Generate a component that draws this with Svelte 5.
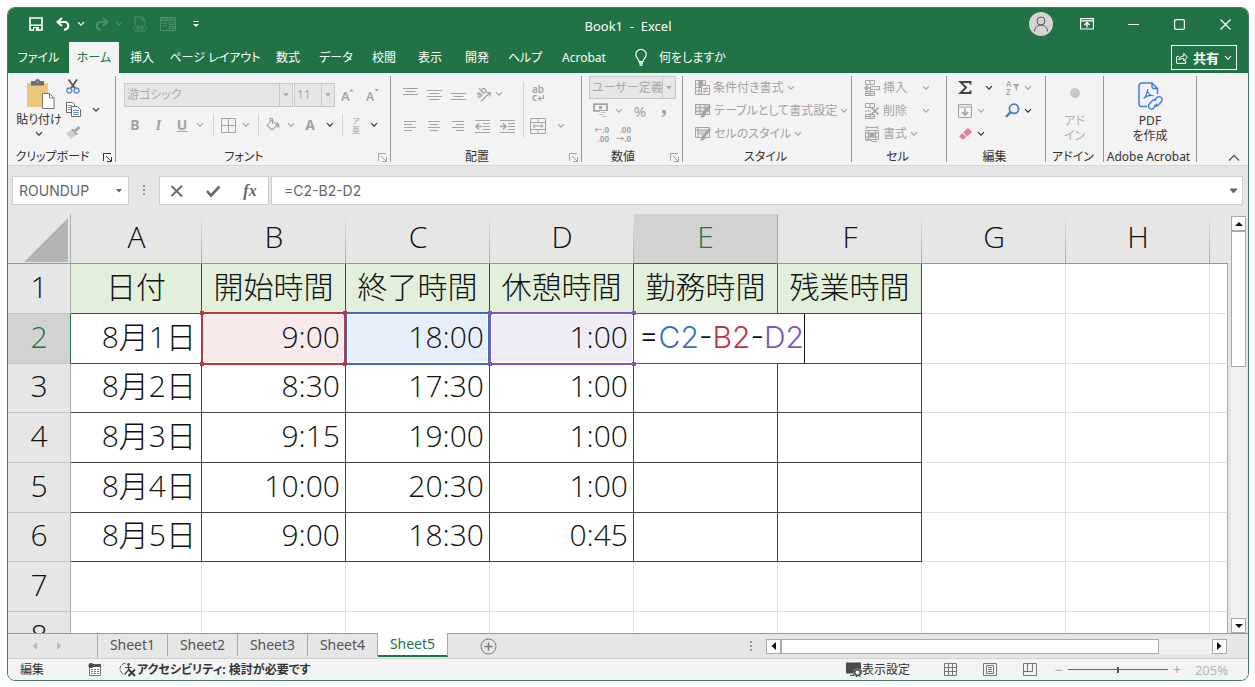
<script>
  const chev = '<path d="M1 1.2 4 4.2 7 1.2" fill="none" stroke="currentColor" stroke-width="1.2"/>';

  const icons = {
    chevron: [8, 6, chev],
    save: [14, 14, '<path d="M1 1h12v12H1z" fill="none" stroke="currentColor" stroke-width="1.6"/><path d="M1 8.2h12" stroke="currentColor" stroke-width="1.4"/><path d="M4 10h6v4H4z" fill="currentColor"/><path d="M5.2 11h1.6v3H5.2z" fill="#217346"/>'],
    undo: [15, 14, '<path d="M6 1 1.6 5 6 9M2 5h7.5a4 4 0 0 1 0 7.6H8" fill="none" stroke="currentColor" stroke-width="2.1"/>'],
    redo: [15, 14, '<path d="M9 1 13.4 5 9 9M13 5H5.500a4 4 0 0 0 0 7.600H7" fill="none" stroke="currentColor" stroke-width="2.1"/>'],
    docTool: [14, 16, '<path d="M2 10V1h7l3 3v6M9 1v3h3M2 13v2h10v-2" fill="none" stroke="currentColor"/><path d="M0 11.500h2M12 11.500h2M4 10h2v3H4zM8 10h2v3H8z" fill="none" stroke="currentColor"/>'],
    formTool: [16, 14, '<path d="M.5.5h15v13H.5zM.5 3.500h15M.5 2h15M2 6h5M2 9h5M9 5.500h5v2H9zM9 9.500h5v2H9z" fill="none" stroke="currentColor"/>'],
    customize: [8, 8, '<path d="M1.500 1.500h5" stroke="currentColor"/><path d="M1 4h6L4 7z" fill="currentColor"/>'],
    user: [24, 24, '<circle cx="12" cy="12" r="12" fill="#d4d4d4"/><circle cx="12" cy="9" r="4" fill="none" stroke="#555"/><path d="M5.500 19.500c0-8.500 13-8.500 13 0" fill="none" stroke="#555"/>'],
    ribbonMode: [14, 12, '<path d="M.6.6h12.800v10.400H.6zM.6 2.800h12.800" fill="none" stroke="currentColor" stroke-width="1.200"/><path d="M7 9.500V5M4.500 7 7 4.500 9.500 7" fill="none" stroke="currentColor" stroke-width="1.300"/>'],
    minimize: [11, 11, '<path d="M0 5.500h11" stroke="currentColor" stroke-width="1.200"/>'],
    maximize: [11, 11, '<rect x=".6" y=".6" width="9.800" height="9.800" rx="1.500" fill="none" stroke="currentColor" stroke-width="1.200"/>'],
    close: [11, 11, '<path d="m.5.5 10 10M10.500.5l-10 10" stroke="currentColor" stroke-width="1.200"/>'],
    share: [12, 12, '<path d="M3 4.500H.6v6.900h9V8.500M2.800 8c.3-3 2.500-4 5-4V1.300l3.500 4L7.800 9V6.500c-2 0-3.800.2-5 1.500z" fill="none" stroke="currentColor"/>'],
    bulb: [12, 17, '<path d="M4 12.500c0-2.500-3.200-3.300-3.200-7a5.200 5.200 0 0 1 10.400 0c0 3.700-3.200 4.500-3.200 7z" fill="none" stroke="currentColor" stroke-width="1.200"/><path d="M4 14h4M4.500 16h3" stroke="currentColor" stroke-width="1.300"/>'],
    paste: [28, 30, '<path d="M0 4h21v24H0z" fill="#ecc67a"/><path d="M4 2h4a2.600 2.600 0 0 1 5 0h4v4.500H4z" fill="#6c6c6c"/><path d="M10.500 2.500v.8" stroke="#fff" stroke-width="1.500"/><path d="M15.500 14.500h7l4.500 4.500v10.500H15.500z" fill="#fff" stroke="#777"/><path d="M22.500 14.500V19H27" fill="none" stroke="#777"/>'],
    cut: [14, 15, '<path d="M2.500.5 9.500 10M11 .5 4.500 10" stroke="#555" stroke-width="1.800"/><circle cx="3.300" cy="11.500" r="2.500" fill="none" stroke="#5a8ac6" stroke-width="1.300"/><circle cx="10.500" cy="11.500" r="2.500" fill="none" stroke="#5a8ac6" stroke-width="1.300"/>'],
    copy: [15, 16, '<path d="M.5.5h6l2 2v8h-8z" fill="#fff" stroke="#666"/><path d="M2 3.500h4M2 5.500h4M2 7.500h4" stroke="#6d94c4"/><path d="M5.500 4.500h6l3 3v7h-9z" fill="#fff" stroke="#666"/><path d="M7 8.500h6M7 10.500h6M7 12.500h6" stroke="#6d94c4"/>'],
    brush: [15, 13, '<path d="M0 7l5-3 4.500 5L5 13z" fill="#cfcfcf"/><path d="m5 3.500 2-1 5 5.500-1.800 1.500z" fill="#a9a9a9"/><path d="m9 5 4.500-4" stroke="#a9a9a9" stroke-width="2.800"/>'],
    launcher: [9, 9, '<path d="M.5 8V.5H8M3 3l5 5M8.500 4v4.500H4" fill="none" stroke="currentColor"/>'],
    grow: [14, 14, '<text x="0" y="13" font-size="13" font-weight="600" fill="currentColor">A</text><path d="M8.500 3.500 10.500 1l2 2.500z" fill="currentColor"/>'],
    shrink: [14, 14, '<text x="0" y="13" font-size="12" font-weight="600" fill="currentColor">A</text><path d="M8.500 1 10.500 3.500l2-2.500z" fill="currentColor"/>'],
    borders: [15, 15, '<path d="M.5.5h14v14H.5zM7.500.5v14M.5 7.500h14" fill="none" stroke="currentColor"/>'],
    fill: [14, 14, '<path d="M1 7.500 6 2l5 5.500-5 4.500zM4 5V.5h2.500V6" fill="none" stroke="currentColor" stroke-width="1.100"/><path d="M10.500 5c1.500.5 2 2 2 4.500" fill="none" stroke="currentColor" stroke-width="2"/>'],
    top: [15, 13, '<path d="M0 .5h15M2.500 3.500h10M0 6.500h15" stroke="currentColor"/>'],
    middle: [15, 13, '<path d="M0 2.500h15M2.500 5.500h10M0 8.500h15M2.500 11.500h10" stroke="currentColor"/>'],
    bottom: [15, 13, '<path d="M0 5.500h15M2.500 8.500h10M0 11.500h15" stroke="currentColor"/>'],
    left: [12, 10, '<path d="M0 .5h12M0 3.500h8M0 6.500h12M0 9.500h8" stroke="currentColor"/>'],
    center: [12, 10, '<path d="M0 .5h12M2 3.500h8M0 6.500h12M2 9.500h8" stroke="currentColor"/>'],
    right: [12, 10, '<path d="M0 .5h12M4 3.500h8M0 6.500h12M4 9.500h8" stroke="currentColor"/>'],
    orient: [16, 15, '<text x="0" y="0" font-size="10" font-weight="600" fill="currentColor" transform="translate(4 12) rotate(-45)">ab</text><path d="M6 14.500 14.500 6M11 5.500h4v4" fill="none" stroke="currentColor" stroke-width="1.200"/>'],
    outdent: [15, 13, '<path d="M0 .5h15M8 3.500h7M8 6.500h7M8 9.500h7M0 12.500h15" stroke="currentColor"/><path d="M7 6.500H1M4 3.500l-3 3 3 3" fill="none" stroke="currentColor" stroke-width="1.600"/>'],
    indent: [15, 13, '<path d="M0 .5h15M8 3.500h7M8 6.500h7M8 9.500h7M0 12.500h15" stroke="currentColor"/><path d="M0 6.500h6M3 3.500l3 3-3 3" fill="none" stroke="currentColor" stroke-width="1.600"/>'],
    merge: [16, 16, '<path d="M.5.5h15v15H.5zM.5 4.500h15M.5 11.500h15M8 .5v4M8 11.500v4M3 8h10M5 6 3 8l2 2M11 6l2 2-2 2" fill="none" stroke="currentColor"/>'],
    wrap: [14, 16, '<text x="1" y="7" font-size="10" font-weight="600" fill="currentColor">ab</text><text x="1" y="15" font-size="10" font-weight="600" fill="currentColor">c</text><path d="M12.500 9v3.500H7.500M9.500 10.500l-2 2 2 2" fill="none" stroke="currentColor" stroke-width="1.100"/>'],
    currency: [16, 15, '<path d="M1 1.200h13v6.600H1z" fill="none" stroke="currentColor" stroke-width="1.800"/><circle cx="7.500" cy="4.500" r="1.800" fill="currentColor"/><path d="M7 8h8v7H7z" fill="#f3f3f3"/><path d="M8 9.500h5M6 11.500h5M9 13.500h5M10 7.500h5" stroke="currentColor" opacity=".6"/>'],
    condFormat: [15, 15, '<path d="M.5.5h10v14H.5zM.5 4h10M.5 7.500h10M.5 11h10M4 .5v14" fill="none" stroke="currentColor"/><path d="M4 1h4v6H4z" fill="currentColor"/><path d="M6.500 5.500h8v9h-8zM8 8.500h5M8 11.500h5M12 7l-3 6" fill="#f3f3f3" stroke="currentColor"/>'],
    tableFormat: [16, 15, '<path d="M.5 1.500h14v10H.5zM.5 4.800h14M.5 8.200h14M5 1.500v10M10 1.500v10" fill="#e4e4e4" stroke="currentColor"/><path d="M15 3 9 10" stroke="currentColor" stroke-width="2.800"/><path d="M5 14.500c3 .5 6-1 5.500-4.500L8 8.800C6 10 7 13 5 14.500z" fill="currentColor"/>'],
    cellStyle: [16, 15, '<path d="M.5 1.500h14v10H.5z" fill="none" stroke="currentColor"/><path d="M3 4h9v5H3z" fill="#d4d0d4"/><path d="M.5 4h14M3 1.500v10" stroke="currentColor"/><path d="M15 3 9 10" stroke="currentColor" stroke-width="2.800"/><path d="M5 14.500c3 .5 6-1 5.500-4.500L8 8.800C6 10 7 13 5 14.500z" fill="currentColor"/>'],
    insertCell: [16, 16, '<path d="M1.500.5h9v4h-9zM6 .5v4M1.500 11.500h9v4h-9zM1.500 13.500h9M6 10v5.500M6.500 6.500h9v3h-9z" fill="none" stroke="currentColor"/><path d="M6 8H1M3.500 5.500 1 8l2.500 2.500" fill="none" stroke="currentColor" stroke-width="1.500"/>'],
    deleteCell: [16, 16, '<path d="M1.500.5h9v4h-9zM6 .5v4M1.500 11.500h9v4h-9zM1.500 13.500h9M6 10v5.500M1 8h6" fill="none" stroke="currentColor"/><path d="m7.500 4.500 7 7M14.500 4.500l-7 7" stroke="currentColor" stroke-width="1.700"/>'],
    formatCell: [16, 16, '<path d="M2.500 1.500h11M2.500 0v3M13.500 0v3M1.500 4.500h13v9h-13zM1.500 7h13M1.500 11h13M4.500 4.500v9M11.500 4.500v9M2 14.500l5-.5 1 1.500h5" fill="none" stroke="currentColor"/><path d="M5.500 7h5v4h-5z" fill="currentColor"/>'],
    sum: [13, 13, '<path d="M11.500 3.500V1H1.500L7 6.500 1.500 12h10V9.500" fill="none" stroke="#444" stroke-width="1.900"/>'],
    fillDown: [14, 14, '<path d="M.5.5h13v13H.5zM.5 3h13" fill="none" stroke="currentColor"/><path d="M7 4.500V11M4 8l3 3 3-3" fill="none" stroke="currentColor" stroke-width="1.700"/>'],
    eraser: [13, 12, '<path d="M4.200 4.500 9 0l4 4-5 4.500z" fill="#e5808f"/><path d="M3.500 5.200 0 8.300l3.700 3.500 3.600-2.700z" fill="#e5808f"/>'],
    sort: [14, 14, '<text x="0" y="6" font-size="8" font-weight="600" fill="currentColor">A</text><text x="0" y="14" font-size="8" font-weight="600" fill="currentColor">Z</text><path d="M7 3h6.500L11 6.300V9.500L9.500 8.500V6.300z" fill="currentColor"/>'],
    find: [15, 15, '<circle cx="9" cy="5.800" r="4.600" fill="none" stroke="#4a7ebb" stroke-width="1.700"/><path d="M5.600 9.200 1 13.800" stroke="#4a7ebb" stroke-width="2.400"/>'],
    dot: [10, 10, '<circle cx="5" cy="5" r="5" fill="#c6c6c6"/>'],
    pdf: [25, 29, '<g fill="none" stroke="#3f7bea" stroke-width="1.500"><path d="M9 24.500H3.500a2.500 2.500 0 0 1-2.500-2.500V3.500A2.500 2.500 0 0 1 3.500 1H14l5.500 5.500V12M14 1v3.500a2 2 0 0 0 2 2h3.500"/><path d="M5.500 16.500c2-1 4.500-6.500 4-9.500M9.500 8c0 3 3 6 6 5.500M6 16c2-2 6-3 9.500-2.500" stroke-width="1.200"/><path d="m16 18.500 3-3a3 3 0 0 1 4.300 4.200l-3 3.200a3 3 0 0 1-4 .2M19 22l-3.200 4a3 3 0 0 1-4.500-4l3-3.200a3 3 0 0 1 3.800-.4" stroke-width="1.400"/></g>'],
    collapse: [12, 8, '<path d="m1 6.500 5-5 5 5" fill="none" stroke="#555" stroke-width="1.300"/>'],
    cancel: [14, 12, '<path d="m1.500 1 10.500 10.500M12 .8 1.500 11" stroke="#6a6a6a" stroke-width="1.900"/>'],
    enter: [15, 12, '<path d="m1 6 4 4.500L13.500 1.500" fill="none" stroke="#6a6a6a" stroke-width="2.600"/>'],
    navLeft: [5, 8, '<path d="M5 0v8L.5 4z" fill="currentColor"/>'],
    navRight: [5, 8, '<path d="M0 0v8l4.500-4z" fill="currentColor"/>'],
    caretDown: [8, 4, '<path d="M0 0h8L4 4z" fill="currentColor"/>'],
    caretUp: [8, 4, '<path d="M0 4h8L4 0z" fill="currentColor"/>'],
    comboArrow: [6, 4, '<path d="M0 0h6L3 3.500z" fill="currentColor"/>'],
    expand: [9, 6, '<path d="M1 1h7L4.500 5z" fill="#666" stroke="#666"/>'],
    addSheet: [17, 17, '<circle cx="8.500" cy="8.500" r="7.500" fill="none" stroke="#777"/><path d="M8.500 4.500v8M4.500 8.500h8" stroke="#777" stroke-width="1.400"/>'],
    macro: [14, 13, '<path d="M1.500 2.500h11v10h-11z" fill="#fff" stroke="#777"/><path d="M5 1h8v3H5z" fill="#555"/><circle cx="3" cy="2.500" r="2.500" fill="#444"/><path d="M3 6.500h8M3 8.500h8M3 10.500h8" stroke="#777" stroke-dasharray="2 1"/>'],
    access: [16, 15, '<path d="M5.500 1.300a5.500 5.500 0 0 0 0 11" fill="none" stroke="#555" stroke-dasharray="4 1"/><path d="M5 5.500h7M8.500 2.500V8l-3.500 4" fill="none" stroke="#444" stroke-width="1.200"/><circle cx="8.500" cy="2.200" r="1.300" fill="#444"/><path d="m8.500 7.500 6.500 6.500M15 7.500 8.500 14" stroke="#333" stroke-width="1.800"/>'],
    display: [16, 15, '<path d="M0 .5h15v11H0z" fill="#4a4a4a"/><path d="M4 13.500h4" stroke="#4a4a4a"/><circle cx="11.500" cy="10.500" r="4" fill="#f3f3f3"/><circle cx="11.500" cy="10.500" r="2.800" fill="none" stroke="#4a4a4a" stroke-width="1.500"/><circle cx="11.500" cy="10.500" r="4.200" fill="none" stroke="#4a4a4a" stroke-width="1.200" stroke-dasharray="1.700 1.600"/>'],
    viewNormal: [13, 13, '<path d="M.5.5h12v12H.5zM4.500.5v12M8.500.5v12M.5 4.500h12M.5 8.500h12" fill="none" stroke="#777"/>'],
    viewPage: [14, 13, '<path d="M.5.5h13v12H.5zM3.500 2.500h7v8h-7zM5 4.500h4M5 6.500h4M5 8.500h4" fill="none" stroke="#777"/>'],
    viewBreak: [14, 13, '<path d="M.5.5h13v12H.5zM.5 8.500h9M4.500.5v8M9.500.5v8" fill="none" stroke="#777"/>'],
  };

  const menu = ['ファイル', 'ホーム', '挿入', 'ページ レイアウト', '数式', 'データ', '校閲', '表示', '開発', 'ヘルプ', 'Acrobat'];
  const cols = ['A', 'B', 'C', 'D', 'E', 'F', 'G', 'H', ''];
  const rows = [
    ['日付', '開始時間', '終了時間', '休憩時間', '勤務時間', '残業時間'],
    ['8月1日', '9:00', '18:00', '1:00', '=C2-B2-D2', ''],
    ['8月2日', '8:30', '17:30', '1:00', '', ''],
    ['8月3日', '9:15', '19:00', '1:00', '', ''],
    ['8月4日', '10:00', '20:30', '1:00', '', ''],
    ['8月5日', '9:00', '18:30', '0:45', '', ''],
    [],
    [],
  ];
  const formula = [
    ['=', ''],
    ['C2', 'blue'],
    ['-', ''],
    ['B2', 'red'],
    ['-', ''],
    ['D2', 'purple'],
  ];
  const refs = { 1: 'red', 2: 'blue', 3: 'purple' };
  const sheets = ['Sheet1', 'Sheet2', 'Sheet3', 'Sheet4', 'Sheet5'];

  let activeMenu = $state('ホーム');
  let activeSheet = $state('Sheet5');
  let zoom = $state(50);
</script>

{#snippet icon(name)}
  {@const [w, h, body] = icons[name]}
  <svg width={w} height={h} viewBox="0 0 {w} {h}" aria-hidden="true">{@html body}</svg>
{/snippet}

{#snippet tool(name, label, cls = '')}
  <button class="tool {cls}" aria-label={label}>{@render icon(name)}</button>
{/snippet}

{#snippet wide(name, label, cls = '')}
  <button class="wide {cls}">{@render icon(name)}<span>{label}</span>{@render icon('chevron')}</button>
{/snippet}

{#snippet groupLabel(label, launcher = '')}
  <div class="group-label">
    <span>{label}</span>
    {#if launcher}<button class="tool launcher {launcher}" aria-label="{label}の設定">{@render icon('launcher')}</button>{/if}
  </div>
{/snippet}

<div class="desktop">
  <div class="window">
    <header class="titlebar">
      <div class="quick">
        {@render tool('save', '上書き保存')}
        {@render tool('undo', '元に戻す')}
        {@render tool('chevron', '元に戻す履歴')}
        {@render tool('redo', 'やり直し', 'faded')}
        {@render tool('chevron', 'やり直し履歴', 'faded')}
        {@render tool('docTool', '文書', 'faded')}
        {@render tool('formTool', 'フォーム', 'faded')}
        {@render tool('customize', 'クイック アクセスのカスタマイズ')}
      </div>
      <div class="title">Book1&nbsp; -&nbsp; Excel</div>
      <div class="controls">
        {@render tool('user', 'アカウント')}
        {@render tool('ribbonMode', 'リボンの表示オプション')}
        {@render tool('minimize', '最小化')}
        {@render tool('maximize', '最大化')}
        {@render tool('close', '閉じる')}
      </div>
    </header>

    <nav class="menubar">
      <div class="menu">
        {#each menu as item}
          <button class:active={item === activeMenu} onclick={() => (activeMenu = item)}>{item}</button>
        {/each}
      </div>
      <button class="tell">{@render icon('bulb')}<span>何をしますか</span></button>
      <button class="share">{@render icon('share')}<span>共有</span>{@render icon('chevron')}</button>
    </nav>

    <section class="ribbon">
      <div class="group">
        <div class="clipboard">
          <button class="big paste">{@render icon('paste')}<span>貼り付け</span>{@render icon('chevron')}</button>
          <div class="stack">
            {@render tool('cut', '切り取り')}
            {@render tool('copy', 'コピー')}
            {@render tool('brush', '書式のコピー')}
          </div>
          {@render tool('chevron', 'コピーのオプション', 'dark')}
        </div>
        {@render groupLabel('クリップボード', 'dark')}
      </div>

      <div class="group">
        <div class="font">
          <div class="font-pick">
            <label class="combo family"><select aria-label="フォント" disabled><option>游ゴシック</option></select><i>{@render icon('comboArrow')}</i></label>
            <label class="combo size"><select aria-label="フォント サイズ" disabled><option>11</option></select><i>{@render icon('comboArrow')}</i></label>
            {@render tool('grow', 'フォント サイズの拡大')}
            {@render tool('shrink', 'フォント サイズの縮小')}
          </div>
          <div class="font-tools">
            <button class="tool glyph"><b>B</b></button>
            <button class="tool glyph serif"><i>I</i></button>
            <button class="tool glyph"><u>U</u></button>
            {@render tool('chevron', '下線の種類')}
            <span class="rule"></span>
            {@render tool('borders', '罫線')}
            {@render tool('chevron', '罫線の種類')}
            <span class="rule"></span>
            {@render tool('fill', '塗りつぶしの色')}
            {@render tool('chevron', '塗りつぶしの一覧')}
            <button class="tool glyph"><b>A</b></button>
            {@render tool('chevron', '文字色の一覧', 'dark')}
            <span class="rule"></span>
            <button class="tool ruby" aria-label="ふりがな"><span>ア</span><span>亜</span></button>
            {@render tool('chevron', 'ふりがなの設定', 'dark')}
          </div>
        </div>
        {@render groupLabel('フォント', 'pale')}
      </div>

      <div class="group">
        <div class="align">
          {@render tool('top', '上揃え')}
          {@render tool('middle', '上下中央揃え')}
          {@render tool('bottom', '下揃え')}
          {@render tool('orient', '方向')}
          {@render tool('chevron', '方向の一覧', 'start')}
          <span class="rule tall"></span>
          {@render tool('wrap', '折り返して全体を表示する')}
          <span></span>
          {@render tool('left', '左揃え')}
          {@render tool('center', '中央揃え')}
          {@render tool('right', '右揃え')}
          {@render tool('outdent', 'インデントを減らす')}
          {@render tool('indent', 'インデントを増やす')}
          {@render tool('merge', 'セルを結合して中央揃え')}
          {@render tool('chevron', '結合の一覧')}
        </div>
        {@render groupLabel('配置', 'pale')}
      </div>

      <div class="group">
        <div class="number">
          <label class="combo format"><select aria-label="数値の書式" disabled><option>ユーザー定義</option></select><i>{@render icon('comboArrow')}</i></label>
          {@render tool('currency', '通貨表示形式')}
          {@render tool('chevron', '通貨の一覧')}
          <button class="tool percent">%</button>
          <button class="tool comma">,</button>
          <button class="tool decimals" aria-label="小数点以下の表示桁数を増やす"><span>←.0</span><span>.00</span></button>
          <button class="tool decimals" aria-label="小数点以下の表示桁数を減らす"><span>.00</span><span>→.0</span></button>
        </div>
        {@render groupLabel('数値', 'pale')}
      </div>

      <div class="group">
        <div class="list">
          {@render wide('condFormat', '条件付き書式')}
          {@render wide('tableFormat', 'テーブルとして書式設定')}
          {@render wide('cellStyle', 'セルのスタイル')}
        </div>
        {@render groupLabel('スタイル')}
      </div>

      <div class="group">
        <div class="list">
          {@render wide('insertCell', '挿入', 'spread')}
          {@render wide('deleteCell', '削除', 'spread')}
          {@render wide('formatCell', '書式')}
        </div>
        {@render groupLabel('セル')}
      </div>

      <div class="group">
        <div class="edit">
          {@render tool('sum', 'オート SUM')}
          {@render tool('chevron', '集計の一覧', 'dark apart')}
          {@render tool('sort', '並べ替えとフィルター', 'end')}
          {@render tool('chevron', '並べ替えの一覧')}
          {@render tool('fillDown', 'フィル')}
          {@render tool('chevron', 'フィルの一覧')}
          {@render tool('find', '検索と選択', 'end')}
          {@render tool('chevron', '検索の一覧', 'dark')}
          {@render tool('eraser', 'クリア')}
          {@render tool('chevron', 'クリアの一覧', 'dark')}
        </div>
        {@render groupLabel('編集')}
      </div>

      <div class="group">
        <button class="big addin" disabled>{@render icon('dot')}<span>アド<br />イン</span></button>
        {@render groupLabel('アドイン')}
      </div>

      <div class="group">
        <button class="big pdf">{@render icon('pdf')}<span>PDF<br />を作成</span></button>
        {@render groupLabel('Adobe Acrobat')}
      </div>

      <div class="tail">{@render tool('collapse', 'リボンを折りたたむ')}</div>
    </section>

    <section class="formula-bar">
      <div class="name-box">
        <input aria-label="名前ボックス" value="ROUNDUP" />
        {@render tool('comboArrow', '名前の一覧')}
      </div>
      <span class="dots"></span>
      <div class="entry">
        {@render tool('cancel', 'キャンセル')}
        {@render tool('enter', '入力')}
        <button class="tool fx">fx</button>
      </div>
      <div class="formula">
        <input aria-label="数式バー" value="=C2-B2-D2" />
        {@render tool('expand', '数式バーの展開')}
      </div>
    </section>

    <main class="workspace">
      <div class="grid">
        <table>
          <colgroup>
            <col class="c-head" />
            <col class="c-first" />
            {#each cols.slice(1, 8) as _}<col class="c-data" />{/each}
            <col />
          </colgroup>
          <thead>
            <tr>
              <th class="corner" aria-label="すべて選択">
                <svg width="44" height="44" viewBox="0 0 44 44"><path d="M44 0v44H0z" fill="#b4b4b4" /></svg>
              </th>
              {#each cols as col}
                <th scope="col" class:current={col === 'E'}>{col}</th>
              {/each}
            </tr>
          </thead>
          <tbody>
            {#each rows as row, r}
              <tr>
                <th scope="row" class:current={r === 1}>{r + 1}</th>
                {#each cols as col, c}
                  <td class:framed={r < 6 && c < 6} class:head={r === 0 && c < 6} class:target={r === 0 && c === 4}>
                    {#if r === 1 && c === 4}
                      <div class="editor">{#each formula as [text, tone]}<span class={tone}>{text}</span>{/each}</div>
                    {:else if r === 1 && refs[c]}
                      <div class="ref {refs[c]}"></div>
                      <span class="value">{row[c]}</span>
                    {:else}
                      {row[c] ?? ''}
                    {/if}
                  </td>
                {/each}
              </tr>
            {/each}
          </tbody>
        </table>
      </div>
      <div class="vscroll">
        <button aria-label="上へ">{@render icon('caretUp')}</button>
        <div class="vthumb"></div>
        <button class="last" aria-label="下へ">{@render icon('caretDown')}</button>
      </div>
    </main>

    <section class="sheetbar">
      <div class="sheet-nav">
        {@render tool('navLeft', '前のシート')}
        {@render tool('navRight', '次のシート')}
      </div>
      {#each sheets as sheet}
        <button class="sheet" class:active={sheet === activeSheet} onclick={() => (activeSheet = sheet)}>{sheet}</button>
      {/each}
      {@render tool('addSheet', '新しいシート', 'add')}
      <span class="dots"></span>
      <div class="hscroll">
        <button aria-label="左へ">{@render icon('navLeft')}</button>
        <div class="hthumb"></div>
        <button class="last" aria-label="右へ">{@render icon('navRight')}</button>
      </div>
    </section>

    <footer class="status">
      <span class="mode">編集</span>
      {@render tool('macro', 'マクロの記録')}
      <button class="access">{@render icon('access')}<b>アクセシビリティ: 検討が必要です</b></button>
      <button class="display">{@render icon('display')}<span>表示設定</span></button>
      <div class="views">
        {@render tool('viewNormal', '標準')}
        {@render tool('viewPage', 'ページ レイアウト')}
        {@render tool('viewBreak', '改ページ プレビュー')}
      </div>
      <button class="tool step">−</button>
      <input class="zoom" type="range" aria-label="ズーム" min="0" max="100" bind:value={zoom} />
      <button class="tool step">+</button>
      <span class="percentage">205%</span>
    </footer>
  </div>
</div>

<style>
  :global(body) {
    margin: 0;
    background: #fff;
  }

  .desktop {
    box-sizing: border-box;
    height: 100vh;
    padding: 7px 6px 6px 7px;
    font: 12px/16px 'Noto Sans', 'Noto Sans CJK JP', sans-serif;
    font-feature-settings: 'palt';
    color: #333;
  }

  .desktop *,
  .desktop *::before,
  .desktop *::after {
    box-sizing: border-box;
  }

  .window {
    display: flex;
    flex-direction: column;
    height: 100%;
    overflow: hidden;
    border: 1px solid #3f7f60;
    border-radius: 8px;
    background: #e6e6e6;
  }

  button,
  input,
  select {
    margin: 0;
    padding: 0;
    border: 0;
    background: none;
    color: inherit;
    font: inherit;
    font-feature-settings: inherit;
  }

  svg {
    display: block;
    flex: none;
    overflow: visible;
  }

  .tool {
    display: flex;
    align-items: center;
    justify-content: center;
  }

  .dark {
    color: #333;
  }

  /* title bar */
  .titlebar {
    display: grid;
    grid-template-columns: 1fr auto 1fr;
    flex: none;
    height: 34px;
    background: #217346;
    color: #fff;
  }

  .quick {
    display: grid;
    grid-template-columns: 28px 27px 8px 32px 4px 38px 18px 38px;
    align-items: center;
    padding: 0 0 2px 14px;
  }

  .faded {
    color: #4d9069;
  }

  .title {
    padding-top: 10px;
    font-size: 13px;
  }

  .controls {
    display: grid;
    grid-template-columns: repeat(5, 46px);
    align-items: center;
    justify-content: end;
    padding-bottom: 2px;
  }

  /* menu */
  .menubar {
    display: flex;
    flex: none;
    align-items: center;
    height: 31px;
    background: #217346;
    color: #fff;
  }

  .menu {
    display: grid;
    grid-template-columns: 61px 50px 46px 100px 46px 50px 46px 46px 48px 48px 70px;
    align-self: stretch;
  }

  .menu button {
    white-space: nowrap;
  }

  .menu .active {
    background: #f3f3f3;
    color: #217346;
  }

  .tell {
    display: flex;
    gap: 12px;
    align-items: center;
    margin-left: 16px;
  }

  .share {
    display: flex;
    gap: 5px;
    align-items: center;
    justify-content: center;
    width: 66px;
    height: 25px;
    margin-right: 11px;
    margin-left: auto;
    border: 1px solid #fff;
    font-size: 13px;
    font-weight: 700;
  }

  /* ribbon */
  .ribbon {
    display: grid;
    grid-template-columns: 108px 275px 191px 101px 169px 95px 99px 58px 93px 1fr;
    flex: none;
    height: 93px;
    border-bottom: 1px solid #d6d6d6;
    background: #f3f3f3;
    color: #a6a2a6;
  }

  .group {
    display: flex;
    flex-direction: column;
    justify-content: space-between;
    margin: 3px 0;
    border-right: 1px solid #999;
  }

  .group-label {
    display: flex;
    align-items: center;
    height: 16px;
    margin-bottom: -3px;
    padding-right: 3px;
    color: #333;
    white-space: nowrap;
  }

  .group-label span {
    flex: 1;
    text-align: center;
  }

  .launcher {
    width: 9px;
    margin-left: 6px;
  }

  .pale {
    color: #a6a2a6;
  }

  .big {
    display: flex;
    flex-direction: column;
    align-items: center;
    color: #333;
  }

  .clipboard {
    display: grid;
    grid-template-columns: 48px 20px 26px;
    padding: 3px 0 0 7px;
  }

  .paste {
    gap: 3px;
    white-space: nowrap;
  }

  .paste svg:first-child {
    margin-left: 4px;
  }

  .stack {
    display: grid;
    grid-template-rows: repeat(3, 23px);
    margin-top: -4px;
  }

  .clipboard > .dark {
    height: 62px;
  }

  .font {
    padding: 7px 0 0 8px;
  }

  .font-pick {
    display: grid;
    grid-template-columns: 169px 41px 24px 24px;
    column-gap: 1px;
    height: 24px;
  }

  .font-tools {
    display: grid;
    grid-template-columns: 22px 25px 22px 14px 12px 18px 18px 6px 24px 12px 26px 14px 10px 18px 18px;
    height: 36px;
    align-items: center;
  }

  .glyph {
    font-size: 14px;
  }

  .glyph u {
    font-weight: 700;
  }

  .serif {
    font-family: 'Liberation Serif', serif;
    font-size: 15px;
    font-weight: 700;
  }

  .ruby {
    flex-direction: column;
    font-size: 8px;
    line-height: 9px;
  }

  .rule {
    justify-self: center;
    width: 1px;
    height: 22px;
    background: #d4d4d4;
  }

  .combo {
    display: flex;
    border: 1px solid #c8c8c8;
    background: #e6e6e6;
    color: #aaa;
  }

  .combo select {
    flex: 1;
    min-width: 0;
    padding-left: 2px;
    appearance: none;
    opacity: 1;
  }

  .combo i {
    display: flex;
    align-items: center;
    justify-content: center;
    width: 13px;
    border-left: 1px solid #c8c8c8;
  }

  .align {
    display: grid;
    grid-template-columns: 24px 24px 24px 25px 24px 8px 22px 24px;
    grid-template-rows: 32px 32px;
    align-items: center;
    padding: 2px 0 0 7px;
  }

  .start {
    justify-content: flex-start;
  }

  .tall {
    grid-row: span 2;
    height: 56px;
  }

  .number {
    display: grid;
    grid-template-columns: 24px 12px 30px 18px;
    grid-template-rows: repeat(3, 23px);
    padding-left: 7px;
  }

  .format {
    grid-column: 1 / -1;
    width: 87px;
  }

  .percent {
    font-size: 15px;
  }

  .comma {
    padding-bottom: 12px;
    font-family: 'Liberation Serif', serif;
    font-size: 24px;
    font-weight: 700;
  }

  .decimals {
    flex-direction: column;
    align-items: flex-end;
    width: 18px;
    margin-left: 2px;
    font-size: 8px;
    line-height: 9px;
    font-weight: 700;
    white-space: nowrap;
  }

  .decimals:last-child {
    margin-left: 0;
  }

  .list {
    display: grid;
    grid-template-rows: repeat(3, 23px);
    padding-left: 12px;
  }

  .wide {
    display: flex;
    gap: 3px;
    align-items: center;
    white-space: nowrap;
  }

  .spread {
    padding-right: 16px;
  }

  .spread svg:last-child {
    margin-left: auto;
  }

  .edit {
    display: grid;
    grid-template-columns: 28px 4px 37px 16px;
    grid-template-rows: repeat(3, 23px);
    padding-left: 4px;
  }

  .end {
    justify-content: flex-end;
  }

  .apart {
    margin-left: 10px;
  }

  .addin {
    height: 67px;
    justify-content: space-between;
    padding-top: 12px;
    line-height: 15px;
    color: #b4b4b4;
  }

  .pdf {
    height: 67px;
    justify-content: space-between;
    padding-top: 6px;
    line-height: 15px;
  }

  .tail {
    display: flex;
    align-items: flex-end;
    justify-content: flex-end;
    padding: 0 8px 3px 0;
  }

  /* formula bar */
  .formula-bar {
    display: flex;
    flex: none;
    height: 48px;
    padding: 10px 5px 9px 4px;
    color: #666;
    font-family: Inter, sans-serif;
    font-feature-settings: normal;
    font-size: 14px;
  }

  .name-box,
  .entry,
  .formula {
    display: flex;
    border: 1px solid #cfcfcf;
    background: #fff;
  }

  .name-box {
    width: 117px;
    padding-right: 6px;
  }

  .name-box input,
  .formula input {
    flex: 1;
    min-width: 0;
    padding-left: 6px;
  }

  .dots {
    align-self: center;
    width: 2px;
    height: 11px;
    margin: 0 14px;
    background: repeating-linear-gradient(#999 0 2px, transparent 2px 4px);
  }

  .entry {
    display: grid;
    grid-template-columns: 34px 38px 36px;
    margin-right: 2px;
  }

  .fx {
    font: italic 700 16px 'Liberation Serif', serif;
  }

  .formula {
    flex: 1;
    padding-right: 4px;
  }

  .formula input {
    padding-left: 12px;
  }

  /* worksheet */
  .workspace {
    display: flex;
    flex: 1;
    min-height: 0;
  }

  .grid {
    flex: 1;
    overflow: hidden;
  }

  table {
    width: 100%;
    table-layout: fixed;
    border-collapse: separate;
    border-spacing: 0;
    background: #fff;
    color: #111;
    font: 300 30px/44px 'Open Sans', 'Noto Sans CJK JP', sans-serif;
    font-feature-settings: normal;
  }

  .c-head {
    width: 63px;
  }

  .c-first {
    width: 131px;
  }

  .c-data {
    width: 144px;
  }

  tr {
    height: 50px;
  }

  tbody tr:nth-child(3n) {
    height: 49px;
  }

  th {
    padding: 0 0 4px;
    border-right: 1px solid #aaa;
    border-bottom: 1px solid #c4c4c4;
    background: #e6e6e6;
    font-weight: 300;
  }

  thead th {
    border-bottom-color: #999;
  }

  thead th:not(.current, .corner) {
    border-right: 0;
    background: linear-gradient(#e6e6e6, #aaa) right / 1px 100% no-repeat #e6e6e6;
  }

  thead th:last-child:not(.current, .corner) {
    background: #e6e6e6;
  }

  .corner {
    padding: 0;
  }

  .corner svg {
    margin: 2px 2px 0 auto;
  }

  th.current {
    background: #d2d2d2;
    color: #217346;
  }

  thead .current {
    border-bottom-color: #217346;
  }

  tbody .current {
    border-right-color: #217346;
  }

  td {
    position: relative;
    padding: 0 5px 4px 0;
    border-right: 1px solid #e0e0e0;
    border-bottom: 1px solid #e0e0e0;
    text-align: right;
    white-space: nowrap;
  }

  td:last-child {
    border-right-color: #aaa;
  }

  .framed {
    border-color: #444;
  }

  .head {
    padding: 0 0 4px;
    background: #e2efda;
    text-align: center;
  }

  .target {
    border-color: #217346;
  }

  .value {
    position: relative;
    z-index: 3;
  }

  .red {
    color: #c0363f;
  }

  .blue {
    color: #3b6cc4;
  }

  .purple {
    color: #7f57b8;
  }

  /* frame round a cell that the formula refers to */
  .ref {
    position: absolute;
    inset: -2px -1px;
    z-index: 2;
    border: 2px solid currentColor;
    background: #f9eaeb;
    box-shadow: inset 0 0 0 1px #fff;
  }

  .ref.blue {
    z-index: 1;
    background: #e8effa;
  }

  .ref.purple {
    border-right: 1px solid #217346;
    background: #f1edf7;
  }

  .ref.red::before,
  .ref.red::after,
  .ref.purple::before,
  .ref.purple::after {
    position: absolute;
    inset: -3px auto -3px -3px;
    width: 4px;
    background: linear-gradient(currentColor 4px, transparent 4px calc(100% - 4px), currentColor calc(100% - 4px));
    content: '';
  }

  .ref.red::after,
  .ref.purple::after {
    inset: -3px -3px -3px auto;
  }

  /* in-cell editor, wider than its cell */
  .editor {
    position: absolute;
    inset: 0 auto 0 0;
    z-index: 1;
    padding-left: 5px;
    border-right: 1px solid #111;
    background: #fff;
    font-family: Inter, sans-serif;
    line-height: 46px;
  }

  .editor::after {
    position: absolute;
    bottom: -1px;
    left: 0;
    width: 144px;
    height: 1px;
    background: #217346;
    content: '';
  }

  .vscroll {
    display: flex;
    flex-direction: column;
    width: 15px;
    margin: 2px 2px 0 3px;
    background: #f1f1f1;
  }

  .vscroll button,
  .hscroll button {
    display: flex;
    flex: none;
    align-items: center;
    justify-content: center;
    width: 15px;
    height: 15px;
    border: 1px solid #aaa;
    background: #fff;
    color: #111;
  }

  .vthumb {
    height: 136px;
    border: 1px solid #aaa;
    background: #fff;
  }

  .vscroll .last {
    margin-top: auto;
  }

  /* sheet tabs */
  .sheetbar {
    display: flex;
    flex: none;
    height: 26px;
    padding-right: 21px;
    border-top: 1px solid #999;
    border-bottom: 1px solid #d0d0d0;
    font-size: 14px;
    color: #555;
  }

  .sheet-nav {
    display: grid;
    grid-template-columns: 25px 25px;
    width: 90px;
    height: 24px;
    padding-left: 14px;
    border-right: 1px solid #aaa;
    color: #bbb;
  }

  .sheet {
    width: 70px;
    height: 22px;
    border-right: 1px solid #aaa;
  }

  .sheet.active {
    height: 24px;
    margin-top: -1px;
    border-bottom: 2px solid #217346;
    background: #fff;
    color: #217346;
  }

  .add {
    margin-left: 32px;
  }

  .sheetbar .dots {
    margin-left: auto;
  }

  .hscroll {
    display: flex;
    align-self: center;
    width: 461px;
    background: #f1f1f1;
  }

  .hthumb {
    width: 378px;
    border: 1px solid #aaa;
    background: #fff;
  }

  .hscroll .last {
    margin-left: auto;
  }

  /* status bar */
  .status {
    display: flex;
    flex: none;
    align-items: center;
    height: 21px;
    padding: 0 20px 0 12px;
    background: #f3f3f3;
  }

  .mode {
    margin-right: 44px;
  }

  .access,
  .display {
    display: flex;
    align-items: center;
  }

  .access {
    gap: 1px;
    margin-left: 18px;
  }

  .display {
    margin-left: auto;
  }

  .views {
    display: flex;
    gap: 26px;
    margin: 0 17px 0 34px;
  }

  .step {
    width: 10px;
    color: #aaa;
    font-size: 14px;
  }

  .zoom {
    width: 100px;
    height: 12px;
    margin: 0 4px;
    appearance: none;
    background: linear-gradient(#666, #666) center / 100% 1px no-repeat;
  }

  .zoom::-webkit-slider-thumb {
    width: 2px;
    height: 6px;
    appearance: none;
    background: #555;
  }

  .percentage {
    width: 46px;
    color: #b4b4b4;
    font-size: 13px;
    text-align: right;
  }
</style>
